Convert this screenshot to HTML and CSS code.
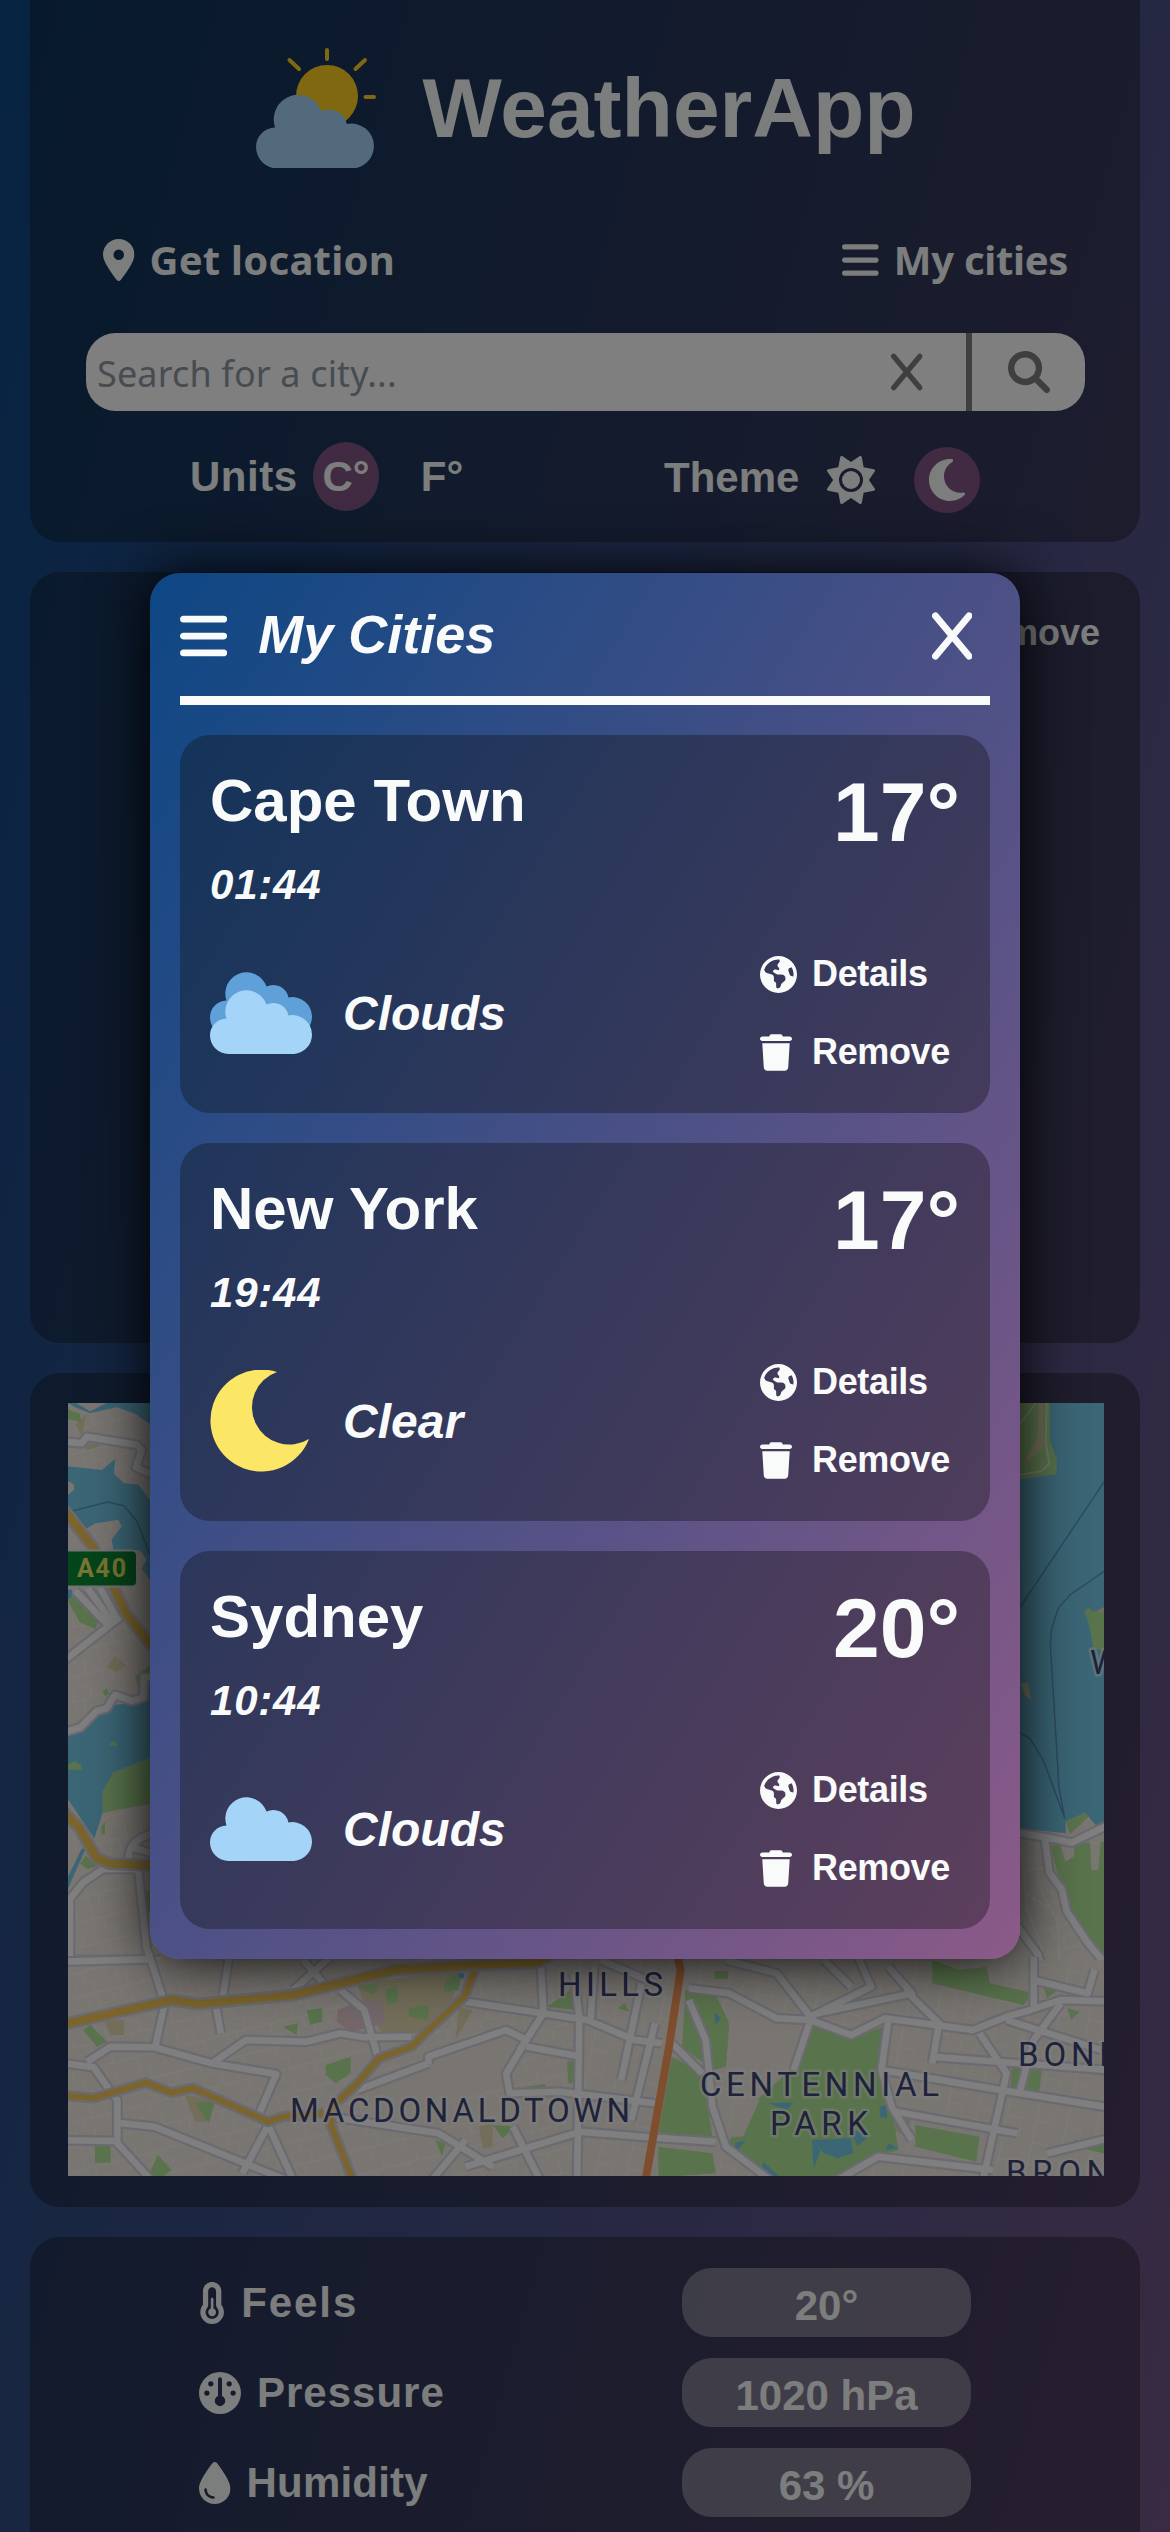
FILE: index.html
```html
<!DOCTYPE html>
<html lang="en">
<head>
<meta charset="utf-8">
<title>WeatherApp</title>
<link rel="stylesheet" href="styles.css">
</head>
<body>
<svg class="sprite" aria-hidden="true">
  <symbol id="pin" viewBox="0 0 384 512"><path d="M215.7 499.2C267 435 384 279.4 384 192C384 86 298 0 192 0S0 86 0 192c0 87.4 117 243 168.3 307.2c12.3 15.3 35.1 15.3 47.4 0zM192 128a64 64 0 1 1 0 128 64 64 0 1 1 0-128z"/></symbol>
  <symbol id="bars" viewBox="0 0 448 512"><path d="M0 96C0 78.3 14.3 64 32 64H416c17.7 0 32 14.3 32 32s-14.3 32-32 32H32C14.3 128 0 113.7 0 96zM0 256c0-17.7 14.3-32 32-32H416c17.7 0 32 14.3 32 32s-14.3 32-32 32H32c-17.7 0-32-14.3-32-32zM448 416c0 17.7-14.3 32-32 32H32c-17.7 0-32-14.3-32-32s14.3-32 32-32H416c17.7 0 32 14.3 32 32z"/></symbol>
  <symbol id="close" viewBox="0 0 384 512"><path d="M32 64L352 448M352 64L32 448" fill="none" stroke="currentColor" stroke-width="64" stroke-linecap="round"/></symbol>
  <symbol id="search" viewBox="0 0 512 512"><g fill="none" stroke="currentColor" stroke-width="78" stroke-linecap="round"><circle cx="208" cy="208" r="169"/><path d="M335 335L472 472"/></g></symbol>
  <symbol id="sun" viewBox="0 0 512 512"><path d="M361.5 1.2c5 2.1 8.6 6.6 9.6 11.9L391 121l107.9 19.8c5.3 1 9.8 4.6 11.9 9.6s1.5 10.7-1.6 15.2L446.9 256l62.3 90.3c3.1 4.5 3.7 10.2 1.6 15.2s-6.6 8.6-11.9 9.6L391 391 371.1 498.9c-1 5.3-4.6 9.8-9.6 11.9s-10.7 1.5-15.2-1.6L256 446.9l-90.3 62.3c-4.5 3.1-10.2 3.7-15.2 1.6s-8.6-6.6-9.6-11.9L121 391 13.1 371.1c-5.3-1-9.8-4.6-11.9-9.6s-1.5-10.7 1.6-15.2L65.1 256 2.8 165.7c-3.1-4.5-3.7-10.2-1.6-15.2s6.6-8.6 11.9-9.6L121 121 140.9 13.1c1-5.3 4.6-9.8 9.6-11.9s10.7-1.5 15.2 1.6L256 65.1 346.3 2.8c4.5-3.1 10.2-3.7 15.2-1.6zM160 256a96 96 0 1 1 192 0 96 96 0 1 1 -192 0zm224 0a128 128 0 1 0 -256 0 128 128 0 1 0 256 0z" fill-rule="evenodd"/></symbol>
  <symbol id="moon" viewBox="0 0 384 512"><path d="M223.5 32C100 32 0 132.3 0 256S100 480 223.5 480c60.6 0 115.5-24.2 155.8-63.4c5-4.9 6.3-12.5 3.1-18.7s-10.1-9.7-17-8.5c-9.8 1.7-19.8 2.6-30.1 2.6c-96.9 0-175.5-78.8-175.5-176c0-65.8 36-123.1 89.3-153.3c6.1-3.5 9.2-10.5 7.7-17.3s-7.3-11.9-14.3-12.5c-6.3-.5-12.6-.8-19-.8z"/></symbol>
  <symbol id="globe" viewBox="0 0 512 512"><path fill-rule="evenodd" d="M57.7 193l9.4 16.4c8.3 14.5 21.9 25.2 38 29.8L163 255.7c17.2 4.9 29 20.6 29 38.5v39.9c0 11 6.2 21 16 25.9s16 14.9 16 25.9v39c0 15.6 14.9 26.9 29.9 22.6c16.1-4.6 28.6-17.5 32.7-33.8l2.8-11.2c4.2-16.9 15.2-31.4 30.3-40l8.1-4.6c15-8.5 24.2-24.5 24.2-41.7v-8.3c0-12.7-5.1-24.9-14.1-33.9l-3.9-3.9c-9-9-21.2-14.1-33.9-14.1H257c-11.1 0-22.1-2.9-31.8-8.4l-34.5-19.7c-4.3-2.5-7.6-6.5-9.2-11.2c-3.2-9.6 1.1-20 10.2-24.5l5.9-3c6.6-3.3 14.3-3.9 21.3-1.5l23.2 7.7c8.2 2.7 17.2-.4 21.9-7.5c4.7-7 4.2-16.3-1.2-22.8l-13.6-16.3c-10-12-9.9-29.5 .3-41.3l15.7-18.3c8.8-10.3 10.2-25 3.5-36.7l-2.4-4.2c-3.5-.2-6.9-.3-10.4-.3C163.1 48 84.4 108.9 57.7 193zM464 256c0-36.8-9.6-71.4-26.4-101.5L412 164.8c-15.7 6.3-23.8 23.8-18.5 39.8l16.9 50.7c3.5 10.4 12 18.3 22.6 20.9l29.1 7.3c1.2-9 1.8-18.2 1.8-27.5zM0 256a256 256 0 1 1 512 0A256 256 0 1 1 0 256z"/></symbol>
  <symbol id="trash" viewBox="0 0 448 512"><path d="M135.2 17.7L128 32H32C14.3 32 0 46.3 0 64S14.3 96 32 96H416c17.7 0 32-14.3 32-32s-14.3-32-32-32H320l-7.2-14.3C307.4 6.8 296.3 0 284.2 0H163.8c-12.1 0-23.2 6.8-28.6 17.7zM416 128H32L53.2 467c1.6 25.3 22.6 45 47.9 45H346.9c25.3 0 46.3-19.7 47.9-45L416 128z"/></symbol>
  <symbol id="thermo" viewBox="0 0 320 512"><path fill-rule="evenodd" d="M160 64c-26.5 0-48 21.5-48 48V276.5c0 17.3-7.1 31.9-15.3 42.5C86.2 332.6 80 349.5 80 368c0 44.2 35.8 80 80 80s80-35.8 80-80c0-18.5-6.2-35.4-16.7-48.9c-8.2-10.6-15.3-25.2-15.3-42.5V112c0-26.5-21.5-48-48-48zM48 112C48 50.2 98.1 0 160 0s112 50.1 112 112V276.5c0 .1 .1 .3 .2 .6c.2 .6 .8 1.6 1.7 2.8c18.9 24.4 30.1 55 30.1 88.1c0 79.5-64.5 144-144 144S16 447.5 16 368c0-33.2 11.2-63.8 30.1-88.1c.9-1.2 1.5-2.2 1.7-2.8c.1-.3 .2-.5 .2-.6V112zM208 368c0 26.5-21.5 48-48 48s-48-21.5-48-48c0-20.9 13.4-38.7 32-45.3V208c0-8.8 7.2-16 16-16s16 7.2 16 16V322.7c18.6 6.6 32 24.4 32 45.3z"/></symbol>
  <symbol id="gauge" viewBox="0 0 512 512"><path fill-rule="evenodd" d="M0 256a256 256 0 1 1 512 0A256 256 0 1 1 0 256zM280 88a24 24 0 0 0-48 0V292.700a64 64 0 1 0 48 0zM176 144a32 32 0 1 0-64 0 32 32 0 1 0 64 0zM128 256a32 32 0 1 0-64 0 32 32 0 1 0 64 0zM400 144a32 32 0 1 0-64 0 32 32 0 1 0 64 0zM448 256a32 32 0 1 0-64 0 32 32 0 1 0 64 0z"/></symbol>
  <symbol id="drop" viewBox="0 0 384 512"><path fill-rule="evenodd" d="M192 512C86 512 0 426 0 320C0 228.800 130.200 57.700 166.600 11.700C172.600 4.200 181.500 0 191.100 0h1.800c9.600 0 18.500 4.200 24.500 11.700C253.800 57.700 384 228.800 384 320c0 106-86 192-192 192zM96 336c0-8.800-7.200-16-16-16s-16 7.200-16 16c0 61.900 50.100 112 112 112c8.800 0 16-7.200 16-16s-7.200-16-16-16c-44.200 0-80-35.800-80-80z"/></symbol>
  <symbol id="cloud" viewBox="0 0 102 64"><path d="M18.500 64A18.500 18.500 0 0 1 0 45.500C0 36 7 29 16.500 28.500A20.500 20.500 0 1 1 56.500 14.500A15.500 15.500 0 0 1 78.500 25.500A19.500 19.500 0 0 1 102 44.500A19.500 19.500 0 0 1 84 64z"/></symbol>
</svg>

<div class="page">
  <header class="panel header">
    <div class="brand">
      <svg class="logo" viewBox="0 0 120 120">
        <circle class="logo-sun" cx="71" cy="48" r="31"/>
        <path class="logo-rays" d="M71 2V11M33.500 12L43 21M109 12L99.500 21M109.500 49H118"/>
        <use href="#cloud" class="cloud-front" x="0" y="46.500" width="118" height="74"/>
      </svg>
      <h1>WeatherApp</h1>
    </div>
    <nav class="nav">
      <button class="nav-btn locate"><svg class="i-pin"><use href="#pin"/></svg>Get location</button>
      <button class="nav-btn mine"><svg class="i-bars"><use href="#bars"/></svg>My cities</button>
    </nav>
    <div class="search">
      <span class="placeholder">Search for a city...</span>
      <span class="clear"><svg class="i-x"><use href="#close"/></svg></span>
      <span class="go"><svg class="i-search"><use href="#search"/></svg></span>
    </div>
    <div class="settings">
      <div class="units"><span>Units</span><span class="unit on">C°</span><span class="unit">F°</span></div>
      <div class="theme"><span>Theme</span><svg class="i-sun"><use href="#sun"/></svg><span class="dark on"><svg class="i-moon"><use href="#moon"/></svg></span></div>
    </div>
  </header>

  <section class="panel current"><button class="current-remove">Remove</button></section>

  <section class="panel map-panel">
    <svg class="map" viewBox="68 1403 1036 773">
      <defs>
        <pattern id="streets" width="34" height="24" patternUnits="userSpaceOnUse" patternTransform="rotate(-14)"><path d="M0 0H34M0 13H34M0 0V24M19 0V13M10 13V24"/></pattern>
        <pattern id="streets2" width="30" height="22" patternUnits="userSpaceOnUse" patternTransform="rotate(12)"><path d="M0 0H30M0 0V22M15 0V22M15 11H30"/></pattern>
        <g id="w-roads">
          <path d="M190 152L245 155L260 143L410 158L425 168L408 200L450 212L480 216"/>
          <path d="M190 562L360 480M225 430L320 492M262 425L335 488M300 425L350 482"/>
          <path d="M190 695L240 686L290 655L320 650L345 625L395 636L430 630L432 592L480 590"/>
          <path d="M204 1010L250 975L310 950L415 950L445 1130M190 1120H480M210 1130V1005M390 940Q370 895 480 880M400 910L480 925"/>
        </g>
        <g id="w-main"><path d="M190 278L280 350L345 430L380 475L450 530L480 545M190 843L240 875L290 930L330 940L480 944"/></g>
        <g id="e-roads">
          <path d="M150 860L255 870L335 880L445 848M255 875L268 935L305 965L320 1005L380 1060L445 1108M170 1030L235 1085L245 1110"/>
        </g>
        <g id="s-roads">
          <path d="M0 65L130 58M128 20L155 190L140 330M0 368L50 382L70 440L85 480L85 610L135 720M0 600L85 603M85 548L140 560L335 720"/>
          <path d="M40 365L75 320L140 322L225 370L320 402L295 520M225 370L275 300L365 305L415 280L450 292L520 290M308 555L270 700M308 555L345 720M415 150L450 210L470 350"/>
          <path d="M230 190L238 280M345 150L400 50M240 180L250 50M360 60L390 130M600 185L780 240L850 300L890 310M545 372L545 350L660 270L690 300L660 400L665 460L740 455L880 490M440 450L545 370"/>
          <path d="M400 530L560 580L640 680M550 720L600 600M600 680L770 575L870 592L970 605M710 20L715 220L680 330M670 560L710 720M690 320L770 350M768 230L765 720M760 100L768 230M790 80L785 235M800 60L880 130M860 130L830 420M880 250L845 540"/>
          <path d="M930 145L990 160L1060 235L1110 240L1170 285L1220 235L1350 270L1400 230L1435 210L1480 180L1560 185M930 180L955 300L965 500L985 620L1050 720M905 310L950 400M985 60L1060 100L1110 230M1110 240L1085 390"/>
          <path d="M1225 240L1215 390L1230 500L1260 600M1215 390L1390 450L1560 505M1290 350L1560 392M1360 280L1400 400L1365 720M1235 515L1416 580M1150 720L1210 650L1380 690M1180 50L1200 140L1110 230M1130 60L1170 140M1440 50L1440 210M1250 150L1300 250L1290 370M1440 120L1520 160L1530 90M1480 190L1440 300L1420 450M1400 240L1540 330M1460 640L1560 590M1225 80L1260 160L1120 220"/>
        </g>
        <g id="s-main"><path d="M-10 260L165 180L205 192L345 165L495 90L610 75L705 68L740 30"/></g>
        <g id="s-second"><path d="M616 80L598 170L550 260L520 320L472 355L440 430L405 495L400 550L434 725M-5 464L50 474L127 428L165 458L197 444L308 545L330 530L390 520"/></g>
      </defs>
      <rect class="land" x="68" y="1403" width="1036" height="773"/>
      <rect x="68" y="1403" width="1036" height="555" fill="url(#streets)"/>
      <rect x="68" y="1958" width="500" height="218" fill="url(#streets)"/>
      <rect x="568" y="1958" width="536" height="218" fill="url(#streets2)"/>

      <svg x="68" y="1403" width="92" height="557" viewBox="204 80 276 1040" preserveAspectRatio="none">
        <path class="sand" d="M225 120L260 100L245 140ZM250 155L310 158L260 168ZM320 575L345 552L380 570L350 582Z"/>
        <path class="park" d="M204 92L240 100L243 116L204 110ZM204 450L230 434L300 480L285 502L240 490ZM308 805L340 770L480 735V825L308 845ZM405 590L450 570L480 580V600L420 620ZM435 990H480V1035L437 1030ZM240 940L257 925L290 945L262 950ZM308 618L320 612L328 622L316 628ZM304 870L315 862V885L304 885Z"/>
        <path class="water" d="M204 80H230L270 96L320 80H480V130L440 115L405 100L350 88L320 92L270 99L225 88ZM204 198L305 205L345 185L342 212L372 230L415 232L450 262L480 270V430L450 410L425 390L440 372L420 355H340L335 335L365 310L355 298L285 305L250 318L204 282ZM204 700L250 690L325 645L400 640L450 600L480 590V735L340 770L308 805V845L283 893L204 820ZM204 965L245 912H257L204 987ZM204 428H215L219 440L204 448Z"/>
        <path class="land" d="M204 226L222 232L222 242L204 252Z"/>
        <path class="park" d="M204 755L225 749L245 757V765H204ZM330 716L342 710L354 720H330Z"/>
        <path class="ferry" d="M204 284L322 265L372 272L410 300L450 362"/>
        <use href="#w-roads" class="casing"/><use href="#w-roads" class="road"/>
        <use href="#w-main" class="casing wide"/><use href="#w-main" class="main"/>
      </svg>

      <svg x="1010" y="1403" width="94" height="557" viewBox="150 78 282 1016" preserveAspectRatio="none">
        <path class="water" d="M150 78H432V850H410L375 825L317 842V863L150 852Z"/>
        <path class="park" d="M150 78H270V147L290 180V208L150 220ZM374 458L385 452L398 458L432 460V530L400 525L387 482Z"/>
        <path class="sand" d="M182 590L203 588L213 619L195 612ZM235 78H250V160L190 190L232 140ZM415 455L432 450V460H412Z"/>
        <path class="street" d="M260 78L257 150L268 188L245 202L150 212M228 78L150 140"/>
        <path class="park" d="M317 842L375 825L388 832L330 864ZM272 885L300 882L316 915L342 905V880H390L394 930H415L422 878H432V1088L370 1045L310 980Z"/>
        <path class="ferry" d="M150 478L432 222M432 385L330 428L295 452L275 490L271 520L297 780L314 835L250 730L210 690L150 670"/>
        <path class="street" d="M185 890L200 1000L250 1080M230 880L235 960L290 1020L300 1094M165 960L270 1000M200 930L262 925"/>
        <use href="#e-roads" class="casing"/><use href="#e-roads" class="road"/>
      </svg>

      <svg x="68" y="1950" width="1036" height="227" viewBox="12 30 1532 681" preserveAspectRatio="none">
        <path class="sand" d="M440 130L590 90L580 180L530 280H478L450 200ZM65 240H95V285H75ZM185 465L230 480L215 545H200ZM620 560L640 550V620L625 625ZM590 200L610 210L585 300ZM1235 520L1260 530L1250 590L1235 570Z"/>
        <path class="pink" d="M410 210L450 180L478 185L480 250L430 275L410 245Z"/>
        <path class="land" d="M550 380L650 290L680 300L655 400V440L575 475L460 460Z"/>
        <path class="park" d="M905 350L950 400L965 590L885 580ZM925 150L970 165L990 250L985 380L965 390L920 320ZM1110 250L1170 290L1220 260L1210 390L1230 500L1240 630L1190 660L1140 715H1050L985 620L1020 500L1080 390ZM1265 555L1360 590L1355 665L1265 620ZM885 620L965 640L970 700L885 712ZM1290 60L1330 90L1370 80L1375 130L1440 160L1425 195L1290 130ZM1408 380L1452 390L1448 455L1406 440ZM1500 600L1544 605V640L1510 625ZM1455 145L1475 150L1460 175ZM1490 205L1508 215L1495 240Z"/>
        <path class="park" d="M34 270L45 255L70 305L55 320ZM365 210L388 205V245L370 255ZM393 375L430 350V400L408 430L393 405ZM515 205L545 195V240L518 230ZM570 120L595 95L590 150L568 155ZM482 150L498 135L500 185L484 195ZM330 260L352 250L350 285ZM440 140L470 130L465 165ZM968 93H988V117H968ZM52 618L75 612V668H52ZM130 710L145 645L165 690L150 715ZM200 490L230 480L220 550ZM640 555L672 560L655 595ZM690 440L718 432V450H690ZM750 365L765 360V430H752ZM720 200L770 130L765 210ZM825 205L835 190L842 215ZM995 290L1008 275L1013 310L998 325ZM555 600L570 610L565 650ZM1000 205L1015 200L1008 240Z"/>
        <path class="land" d="M985 165L1100 250L1085 330L1025 380L995 370ZM985 590L1020 475L1035 480L1010 590Z"/>
        <path class="water" d="M1113 600L1170 595L1173 640L1150 655L1130 640ZM1112 600L1125 630L1115 685ZM1165 560L1195 590L1180 618ZM1048 490L1085 487L1075 510ZM1212 500L1223 495V535L1213 530ZM998 610L1015 600L1000 635ZM1040 665L1065 712H1035ZM1225 610L1240 625L1222 630ZM968 215L977 235L970 255ZM590 100H598V115H590Z"/>
        <use href="#s-roads" class="casing"/><use href="#s-roads" class="road"/>
        <use href="#s-second" class="casing"/><use href="#s-second" class="main second"/>
        <use href="#s-main" class="casing wide"/><use href="#s-main" class="main"/>
        <path class="highway" d="M910 20L918 90L900 330L866 720"/>
      </svg>

      <rect class="badge" x="50" y="1550.500" width="87" height="36" rx="5"/>
      <text class="badge-text" x="77" y="1577" textLength="49">A40</text>
      <g class="labels">
        <text x="558" y="1996" textLength="105">HILLS</text>
        <text x="290" y="2121.500" textLength="340">MACDONALDTOWN</text>
        <text x="700" y="2096" textLength="239">CENTENNIAL</text>
        <text x="770" y="2135" textLength="98">PARK</text>
        <text x="1018" y="2065.500" textLength="103">BOND</text>
        <text x="1006" y="2183.500" textLength="104">BRON</text>
        <text x="1090" y="1674">W</text>
      </g>
    </svg>
  </section>

  <section class="panel stats">
    <div class="stat"><span class="stat-name"><svg class="i-thermo"><use href="#thermo"/></svg><span class="feels">Feels</span></span><span class="pill">20°</span></div>
    <div class="stat"><span class="stat-name"><svg class="i-gauge"><use href="#gauge"/></svg><span class="pressure">Pressure</span></span><span class="pill">1020 hPa</span></div>
    <div class="stat"><span class="stat-name"><svg class="i-pin"><use href="#drop"/></svg><span>Humidity</span></span><span class="pill">63 %</span></div>
  </section>
</div>

<div class="overlay">
  <div class="popup">
    <div class="popup-head">
      <svg class="p-bars"><use href="#bars"/></svg>
      <h2>My Cities</h2>
      <svg class="p-close"><use href="#close"/></svg>
    </div>
    <article class="card">
      <div class="card-top"><div><h3>Cape Town</h3><p class="time">01:44</p></div><p class="temp">17°</p></div>
      <div class="card-bottom">
        <svg class="weather" viewBox="0 0 102 102"><use href="#cloud" class="cloud-back" y="10" width="102" height="64"/><use href="#cloud" class="cloud-front" y="28" width="102" height="64"/></svg>
        <p class="desc">Clouds</p>
        <div class="actions"><button><svg class="i-globe"><use href="#globe"/></svg>Details</button><button><svg class="i-trash"><use href="#trash"/></svg>Remove</button></div>
      </div>
    </article>
    <article class="card">
      <div class="card-top"><div><h3>New York</h3><p class="time">19:44</p></div><p class="temp">17°</p></div>
      <div class="card-bottom">
        <svg class="weather" viewBox="0 0 102 102"><path class="night" d="M67 2A51 51 0 1 0 99 69A37.350 37.350 0 1 1 67 2z"/></svg>
        <p class="desc">Clear</p>
        <div class="actions"><button><svg class="i-globe"><use href="#globe"/></svg>Details</button><button><svg class="i-trash"><use href="#trash"/></svg>Remove</button></div>
      </div>
    </article>
    <article class="card">
      <div class="card-top"><div><h3>Sydney</h3><p class="time">10:44</p></div><p class="temp">20°</p></div>
      <div class="card-bottom">
        <svg class="weather" viewBox="0 0 102 102"><use href="#cloud" class="cloud-front" y="19" width="102" height="64"/></svg>
        <p class="desc">Clouds</p>
        <div class="actions"><button><svg class="i-globe"><use href="#globe"/></svg>Details</button><button><svg class="i-trash"><use href="#trash"/></svg>Remove</button></div>
      </div>
    </article>
  </div>
</div>
</body>
</html>
```
FILE: styles.css
```css
* { box-sizing: border-box; margin: 0; padding: 0; }
html, body { height: 2532px; overflow: hidden; }
body {
  font-family: "Liberation Sans", Arial, sans-serif;
  font-weight: 700;
  color: #f9fafa;
}
button { background: none; border: 0; color: inherit; font: inherit; }
svg { fill: currentColor; flex: none; display: block; }
.sprite { position: absolute; width: 0; height: 0; }

.page {
  height: 2532px;
  overflow: hidden;
  padding: 0 30px;
  background: linear-gradient(to right bottom, #0d4784, #8b5a88) 0 0 / 100% 4300px no-repeat;
  display: flex;
  flex-direction: column;
  gap: 30px;
}
.panel { background: rgba(16, 16, 16, .36); border-radius: 30px; flex: none; }

/* Header */
.header { height: 542px; border-radius: 0 0 30px 30px; padding: 48px 55px 0 56px; }
.brand { display: flex; justify-content: center; gap: 46px; height: 120px; padding-left: 1px; }
.logo { width: 120px; height: 120px; }
.logo-sun { fill: #ffd01f; }
.logo-rays { stroke: #ffd01f; stroke-width: 4; stroke-linecap: round; }
.cloud-front { fill: #a4d4f8; }
.cloud-back { fill: #5fa0d8; }
h1 { font-size: 84px; line-height: 121px; }
.nav { display: flex; justify-content: space-between; margin-top: 67px; padding: 0 17px; height: 50px; }
.nav-btn { display: flex; align-items: center; gap: 15px; font: 700 40px/50px "Noto Sans", sans-serif; }
.locate { letter-spacing: .25px; }
.mine { letter-spacing: -.3px; }
.i-pin { width: 31.5px; height: 42px; }
.i-bars { width: 36.75px; height: 42px; }
.search {
  display: flex; align-items: stretch; height: 78px; margin-top: 48px;
  background: #fff; border-radius: 30px; color: #7e7e7e; overflow: hidden;
}
.placeholder { flex: 1; padding-left: 11px; font: 400 36px/81px "Noto Sans", sans-serif; letter-spacing: .15px; color: #8c98a2; }
.clear { width: 119px; padding-left: 44px; display: flex; align-items: center; }
.i-x { width: 31.5px; height: 42px; }
.go { width: 119px; border-left: 6px solid #7e7e7e; display: flex; align-items: center; justify-content: center; }
.i-search { width: 42px; height: 42px; }
.settings { display: flex; margin-top: 31px; font-size: 42px; line-height: 69px; }
.units { display: flex; width: 472px; padding-left: 104px; }
.units > span:first-child { width: 123px; letter-spacing: .5px; }
.unit { width: 66px; text-align: center; margin-right: 30px; height: 69px; border-radius: 50%; }
.on { background: #825684; }
.theme { display: flex; align-items: center; padding-left: 106px; }
.theme > span:first-child { width: 163px; }
.i-sun { width: 48px; height: 48px; margin-top: 5px; }
.dark { width: 66px; height: 66px; border-radius: 50%; margin: 5px 0 0 39px; display: flex; align-items: center; justify-content: center; }
.i-moon { width: 36px; height: 48px; }

/* Current city */
.current { height: 771px; display: flex; justify-content: flex-end; align-items: flex-start; padding: 39px 40px 0; }
.current-remove { font-size: 36px; line-height: 44px; }

/* Map */
.map-panel { height: 834px; padding: 30px 36px 0 38px; }
.map { width: 1036px; height: 773px; overflow: hidden; }
.map path { vector-effect: non-scaling-stroke; stroke-linejoin: round; }
.map svg { overflow: hidden; }
.map pattern path { fill: none; stroke: rgba(255, 255, 255, .42); stroke-width: 1.6; }
.land { fill: #f2ebe2; }
.water { fill: #77ccec; }
.park { fill: #b2e698; }
.sand { fill: #e6dcb4; }
.pink { fill: #e8ccd2; }
.ferry { fill: none; stroke: #5a98c4; stroke-width: 1.5; }
.street { fill: none; stroke: rgba(255, 255, 255, .6); stroke-width: 2; }
.casing { fill: none; stroke: #d6d5e2; stroke-width: 11; }
.road { fill: none; stroke: #fff; stroke-width: 6.500; }
.casing.wide { stroke-width: 13; }
.main { fill: none; stroke: #f6cb5a; stroke-width: 8; }
.second { stroke-width: 6; }
.highway { fill: none; stroke: #ff9c5c; stroke-width: 8; }
.badge { fill: #0a8a34; stroke: #e8e8e8; stroke-width: 2; }
.badge-text { font: 700 25px Roboto, sans-serif; fill: #f2ee68; }
.labels { font: 400 33px Roboto, sans-serif; fill: #3e4476; stroke: rgba(255, 255, 255, .55); stroke-width: 5; paint-order: stroke; stroke-linejoin: round; }

/* Readings */
.stats { height: 500px; padding: 31px 0 0 169px; display: flex; flex-direction: column; gap: 21px; }
.stat { display: flex; height: 69px; font-size: 42px; line-height: 71px; }
.stat-name { width: 483px; display: flex; align-items: center; gap: 16px; letter-spacing: .2px; }
.stat-name .feels { letter-spacing: 1.9px; }
.stat-name .pressure { letter-spacing: 1px; }
.i-thermo { width: 26.25px; height: 42px; }
.i-gauge { width: 42px; height: 42px; }
.pill { width: 289px; border-radius: 30px; background: rgba(255, 255, 255, .33); text-align: center; line-height: 76px; height: 69px; }

/* My cities popup */
.overlay { position: absolute; inset: 0; height: 2532px; background: rgba(0, 0, 0, .5); display: flex; align-items: center; justify-content: center; }
.popup {
  width: 870px; height: 1386px; padding: 30px; border-radius: 30px;
  background: linear-gradient(to right bottom, #0d4784, #8b5a88);
  box-shadow: 0 0 60px #000;
}
.popup-head { display: flex; align-items: flex-start; height: 102px; border-bottom: 9px solid #f9fafa; margin-bottom: 30px; }
.p-bars { width: 47.25px; height: 54px; margin-top: 6px; }
.p-close { width: 40.5px; height: 54px; margin: 6px 18px 0 auto; }
h2 { font-size: 54px; line-height: 63px; font-style: italic; margin-left: 31px; }
.card { height: 378px; border-radius: 30px; padding: 30px; background: rgba(16, 16, 16, .36); }
.card + .card { margin-top: 30px; }
.card-top { display: flex; justify-content: space-between; height: 188px; }
h3 { font-size: 60px; line-height: 71px; }
.time { font-size: 42px; line-height: 48px; font-style: italic; letter-spacing: .8px; margin-top: 25px; }
.temp { font-size: 84px; line-height: 94px; }
.card-bottom { display: flex; align-items: center; height: 120px; }
.weather { width: 102px; height: 102px; }
.night { fill: #fbe665; }
.desc { font-size: 48px; line-height: 54px; font-style: italic; margin-left: 31px; padding-top: 2px; }
.actions { margin-left: auto; width: 200px; display: flex; flex-direction: column; gap: 36px; }
.actions button { display: flex; align-items: center; gap: 15px; height: 42px; font-size: 36px; line-height: 40px; letter-spacing: -.35px; }
.i-globe { width: 37px; height: 37px; }
.i-trash { width: 32px; height: 37px; margin-right: 5px; }
```
